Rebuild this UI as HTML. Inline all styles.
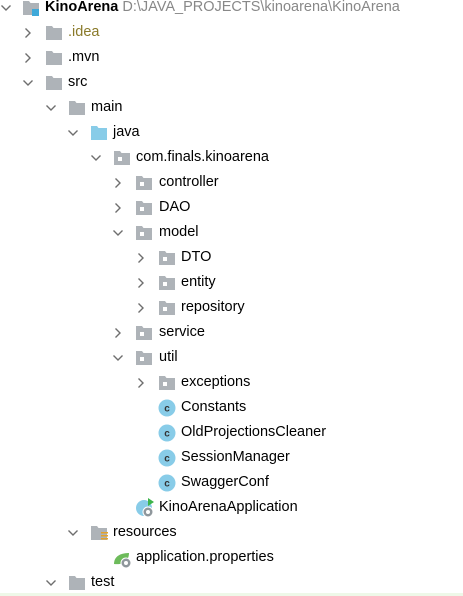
<!DOCTYPE html>
<html><head><meta charset="utf-8"><style>
body{margin:0;width:463px;height:596px;background:#fff;overflow:hidden;font-family:"Liberation Sans",sans-serif;font-size:14.5px;color:#000;position:relative}
.r{position:absolute;height:20px;left:0;right:0}
.t{position:absolute;top:2px;white-space:nowrap}
.a{position:absolute;top:5px;width:12px;height:12px}
.i{position:absolute;top:3px;width:18px;height:16px}
.strip{position:absolute;left:0;right:0;top:593px;height:3px;background:#eef8e8}
</style></head><body>
<svg width="0" height="0" style="position:absolute">
<defs>
<symbol id="dn" viewBox="0 0 12 12"><path d="M1.5 3.5 L6 8 L10.5 3.5" fill="none" stroke="#6e6e6e" stroke-width="1.4"/></symbol>
<symbol id="rt" viewBox="0 0 12 12"><path d="M3.5 1.5 L8 6 L3.5 10.5" fill="none" stroke="#6e6e6e" stroke-width="1.4"/></symbol>
<symbol id="fd" viewBox="0 0 18 16"><path d="M1 1 H7 L8.5 3 H17 V15 H1 Z" fill="#aeb3b8"/></symbol>
<symbol id="fj" viewBox="0 0 18 16"><path d="M1 1 H7 L8.5 3 H17 V15 H1 Z" fill="#88cce8"/></symbol>
<symbol id="pk" viewBox="0 0 18 16"><path d="M1 1 H7 L8.5 3 H17 V15 H1 Z" fill="#aeb3b8"/><rect x="5" y="7" width="4" height="4" fill="#fff"/></symbol>
<symbol id="cl" viewBox="0 0 18 18"><circle cx="9" cy="9" r="8.5" fill="#88cce8"/><text x="9" y="12.5" font-size="10" font-weight="bold" font-family="Liberation Sans" text-anchor="middle" fill="#333">c</text></symbol>
</defs></svg>

<div class="r" style="top:-3px"><svg class="a" style="left:0"><use href="#dn" width="12" height="12"/></svg><svg class="i" style="left:22px"><path d="M1 1 H7 L8.5 3 H17 V15 H1 Z" fill="#aeb3b8"/><rect x="10" y="9" width="7" height="7" fill="#3fa9d9"/></svg><span class="t" style="left:45px"><b>KinoArena</b> <span style="color:#888">D:\JAVA_PROJECTS\kinoarena\KinoArena</span></span></div>

<div class="r" style="top:22px"><svg class="a" style="left:22px"><use href="#rt" width="12" height="12"/></svg><svg class="i" style="left:45px"><use href="#fd" width="18" height="16"/></svg><span class="t" style="left:68px;color:#8a7a2a">.idea</span></div>
<div class="r" style="top:47px"><svg class="a" style="left:22px"><use href="#rt" width="12" height="12"/></svg><svg class="i" style="left:45px"><use href="#fd" width="18" height="16"/></svg><span class="t" style="left:68px">.mvn</span></div>
<div class="r" style="top:72px"><svg class="a" style="left:22px"><use href="#dn" width="12" height="12"/></svg><svg class="i" style="left:45px"><use href="#fd" width="18" height="16"/></svg><span class="t" style="left:68px">src</span></div>
<div class="r" style="top:97px"><svg class="a" style="left:45px"><use href="#dn" width="12" height="12"/></svg><svg class="i" style="left:68px"><use href="#fd" width="18" height="16"/></svg><span class="t" style="left:91px">main</span></div>
<div class="r" style="top:122px"><svg class="a" style="left:67px"><use href="#dn" width="12" height="12"/></svg><svg class="i" style="left:90px"><use href="#fj" width="18" height="16"/></svg><span class="t" style="left:113px">java</span></div>
<div class="r" style="top:147px"><svg class="a" style="left:90px"><use href="#dn" width="12" height="12"/></svg><svg class="i" style="left:113px"><use href="#pk" width="18" height="16"/></svg><span class="t" style="left:136px">com.finals.kinoarena</span></div>
<div class="r" style="top:172px"><svg class="a" style="left:112px"><use href="#rt" width="12" height="12"/></svg><svg class="i" style="left:135px"><use href="#pk" width="18" height="16"/></svg><span class="t" style="left:159px">controller</span></div>
<div class="r" style="top:197px"><svg class="a" style="left:112px"><use href="#rt" width="12" height="12"/></svg><svg class="i" style="left:135px"><use href="#pk" width="18" height="16"/></svg><span class="t" style="left:159px">DAO</span></div>
<div class="r" style="top:222px"><svg class="a" style="left:112px"><use href="#dn" width="12" height="12"/></svg><svg class="i" style="left:135px"><use href="#pk" width="18" height="16"/></svg><span class="t" style="left:159px">model</span></div>
<div class="r" style="top:247px"><svg class="a" style="left:135px"><use href="#rt" width="12" height="12"/></svg><svg class="i" style="left:158px"><use href="#pk" width="18" height="16"/></svg><span class="t" style="left:181px">DTO</span></div>
<div class="r" style="top:272px"><svg class="a" style="left:135px"><use href="#rt" width="12" height="12"/></svg><svg class="i" style="left:158px"><use href="#pk" width="18" height="16"/></svg><span class="t" style="left:181px">entity</span></div>
<div class="r" style="top:297px"><svg class="a" style="left:135px"><use href="#rt" width="12" height="12"/></svg><svg class="i" style="left:158px"><use href="#pk" width="18" height="16"/></svg><span class="t" style="left:181px">repository</span></div>
<div class="r" style="top:322px"><svg class="a" style="left:112px"><use href="#rt" width="12" height="12"/></svg><svg class="i" style="left:135px"><use href="#pk" width="18" height="16"/></svg><span class="t" style="left:159px">service</span></div>
<div class="r" style="top:347px"><svg class="a" style="left:112px"><use href="#dn" width="12" height="12"/></svg><svg class="i" style="left:135px"><use href="#pk" width="18" height="16"/></svg><span class="t" style="left:159px">util</span></div>
<div class="r" style="top:372px"><svg class="a" style="left:135px"><use href="#rt" width="12" height="12"/></svg><svg class="i" style="left:158px"><use href="#pk" width="18" height="16"/></svg><span class="t" style="left:181px">exceptions</span></div>
<div class="r" style="top:397px"><svg class="i" style="left:158px;top:2px;height:18px"><use href="#cl" width="18" height="18"/></svg><span class="t" style="left:181px">Constants</span></div>
<div class="r" style="top:422px"><svg class="i" style="left:158px;top:2px;height:18px"><use href="#cl" width="18" height="18"/></svg><span class="t" style="left:181px">OldProjectionsCleaner</span></div>
<div class="r" style="top:447px"><svg class="i" style="left:158px;top:2px;height:18px"><use href="#cl" width="18" height="18"/></svg><span class="t" style="left:181px">SessionManager</span></div>
<div class="r" style="top:472px"><svg class="i" style="left:158px;top:2px;height:18px"><use href="#cl" width="18" height="18"/></svg><span class="t" style="left:181px">SwaggerConf</span></div>
<div class="r" style="top:497px"><svg class="i" style="left:136px;top:0;height:21px" viewBox="0 0 18 21"><circle cx="8" cy="11" r="8" fill="#88cce8"/><path d="M12 1 L18 5 L12 9 Z" fill="#3cb44a"/><circle cx="12" cy="15" r="5" fill="#8f979c" stroke="#fff" stroke-width="1"/><circle cx="12" cy="15" r="2" fill="#fff"/></svg><span class="t" style="left:159px">KinoArenaApplication</span></div>
<div class="r" style="top:522px"><svg class="a" style="left:67px"><use href="#dn" width="12" height="12"/></svg><svg class="i" style="left:90px"><path d="M1 1 H7 L8.5 3 H17 V15 H1 Z" fill="#aeb3b8"/><rect x="11" y="7" width="7" height="1.5" fill="#e3a32c"/><rect x="11" y="10" width="7" height="1.5" fill="#e3a32c"/><rect x="11" y="13" width="7" height="1.5" fill="#e3a32c"/></svg><span class="t" style="left:113px">resources</span></div>
<div class="r" style="top:547px"><svg class="i" style="left:113px;height:18px" viewBox="0 0 18 18"><path d="M1 14 C1 6 8 3 16 3 C16 11 10 15 1 14 Z" fill="#6dbb5b"/><circle cx="13" cy="13" r="5" fill="#8f979c" stroke="#fff" stroke-width="1"/><circle cx="13" cy="13" r="2" fill="#fff"/></svg><span class="t" style="left:136px">application.properties</span></div>
<div class="r" style="top:572px"><svg class="a" style="left:45px"><use href="#dn" width="12" height="12"/></svg><svg class="i" style="left:68px"><use href="#fd" width="18" height="16"/></svg><span class="t" style="left:91px">test</span></div>
<div class="strip"></div>
</body></html>
